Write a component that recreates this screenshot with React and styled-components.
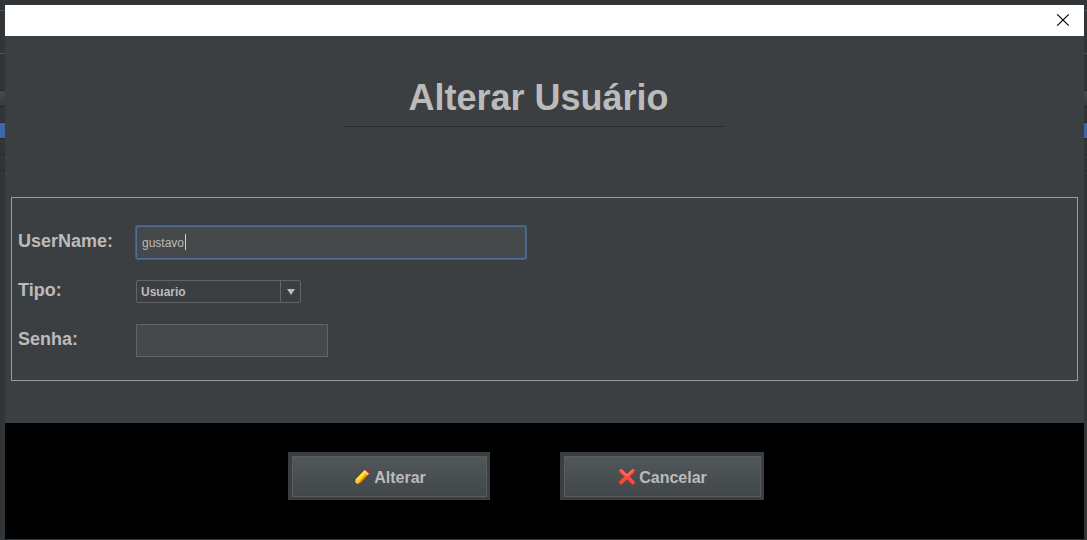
import React, { useState } from "react";
import styled, { createGlobalStyle } from "styled-components";

const GlobalStyle = createGlobalStyle`
  *, *::before, *::after { box-sizing: border-box; }
  body {
    margin: 0;
    background: #323537;
    color: #bbbbbb;
    font-family: "Liberation Sans", Arial, sans-serif;
  }
  button, input, select { font-family: inherit; color: inherit; }
`;

const Page = styled.div`
  display: grid;
  grid-template-columns: 5px minmax(0, 1fr) 3px;
  min-height: 100vh;
  padding: 5px 0 1px;
`;

const Edge = styled.div`
  display: flex;
  flex-direction: column;
`;

const Band = styled.div`
  height: ${(p) => p.$height}px;
  background: ${(p) => p.$fill || "transparent"};
  border-bottom: 1px solid ${(p) => p.$line || "#25282a"};
`;

const Dialog = styled.main`
  display: flex;
  flex-direction: column;
  background: #3c3f41;
`;

const TitleBar = styled.div`
  display: flex;
  justify-content: flex-end;
  align-items: center;
  height: 31px;
  padding: 0 14px 1px 0;
  background: #ffffff;
`;

const CloseButton = styled.button`
  display: flex;
  padding: 0;
  border: 0;
  background: none;
`;

const Header = styled.header`
  display: flex;
  justify-content: center;
  padding: 41px 22px 0 0;
`;

const Heading = styled.h1`
  width: 380px;
  margin: 0;
  padding: 0 0 7px 10px;
  border-bottom: 1px solid #2a2d2f;
  font-size: 36px;
  line-height: 42px;
  text-align: center;
`;

const Form = styled.form`
  display: flex;
  flex: 1;
  flex-direction: column;
`;

const Panel = styled.div`
  display: flex;
  flex-direction: column;
  gap: 21px;
  margin: 70px 6px 42px;
  padding: 28px 6px 23px;
  border: 1px solid #999c9d;
`;

const Row = styled.div`
  display: flex;
  align-items: center;
`;

const Label = styled.label`
  width: 118px;
  padding-bottom: 3px;
  font-size: 18px;
  font-weight: bold;
  line-height: 20px;
`;

const Field = styled.div`
  position: relative;
  display: flex;
  width: ${(p) => p.$width}px;
`;

const TextInput = styled.input`
  width: 100%;
  height: 33px;
  padding: 0 5px;
  border: 1px solid ${(p) => (p.$active ? "#4f7099" : "#646464")};
  border-radius: ${(p) => (p.$active ? 2 : 0)}px;
  outline: 0;
  box-shadow: ${(p) => (p.$active ? "0 0 0 1px #446084" : "none")};
  background: #45494a;
  font-size: 12px;
`;

const Caret = styled.span`
  position: absolute;
  top: 8px;
  left: 49px;
  width: 1px;
  height: 16px;
  background: #d0d0d0;
`;

const Select = styled.select`
  width: 100%;
  height: 23px;
  padding: 0 24px 0 4px;
  border: 1px solid #646464;
  border-radius: 2px;
  appearance: none;
  background: #3c3f41;
  font-size: 12px;
  font-weight: bold;
`;

const SelectArrow = styled.span`
  position: absolute;
  top: 1px;
  right: 1px;
  bottom: 1px;
  display: flex;
  align-items: center;
  justify-content: center;
  width: 20px;
  border-left: 1px solid #646464;
  pointer-events: none;
`;

const Footer = styled.footer`
  display: flex;
  flex: 1;
  justify-content: center;
  align-items: flex-start;
  gap: 70px;
  padding: 29px 37px 29px 0;
  background: #000000;
`;

const ActionButton = styled.button`
  display: flex;
  align-items: center;
  justify-content: center;
  gap: 3px;
  width: ${(p) => p.$width}px;
  height: 48px;
  padding: 2px 0 0;
  border: solid #3c3f41;
  border-width: 4px 3px 3px 4px;
  background: linear-gradient(#525759, #414648) padding-box;
  box-shadow: inset 0 0 0 1px #585d5f;
  font-size: 16px;
  font-weight: bold;

  svg { margin-top: -2px; }
`;

const PencilIcon = () => (
  <svg width="18" height="18" viewBox="0 0 18 18" aria-hidden="true">
    <path d="M2 16.5 2.6 11.6 6.8 14.8Z" fill="#f0d0a0" />
    <path d="M1.8 16.8 2.1 14.6 4 16Z" fill="#3a2418" />
    <path d="M2.6 11.6 10.8 3 15.2 6.8 7 15 4.4 15.6Z" fill="#f8bd00" />
    <path d="M2.6 11.6 10.8 3 13 4.8 4.8 13.4Z" fill="#ffe24a" />
    <path d="M5.8 15.2 14 6.4 15.2 7.2 7.2 15.2Z" fill="#b96a12" />
    <path d="M10.6 3.3 12 1.8 16.2 5.4 14.8 7Z" fill="#e6dcd6" />
    <path d="M12 1.9Q13.6 .4 15.5 1.4 17.6 3 16.7 4.8L15.9 5.7Z" fill="#b82a22" />
  </svg>
);

const CrossIcon = () => (
  <svg width="18" height="18" viewBox="0 0 18 18" aria-hidden="true">
    <path d="M3 3.2 15 14.8M15 3.2 3 14.8" stroke="#c92e29" strokeWidth="4" strokeLinecap="round" />
    <path d="M3 2.8 15 14.3M15 2.8 3 14.3" stroke="#f54a40" strokeWidth="3.8" strokeLinecap="round" />
    <path d="M3 2.2 8.9 7.6 14.8 2.2" stroke="#ff7a6e" strokeWidth="1.2" strokeLinecap="round" fill="none" />
  </svg>
);

const BackdropEdge = () => (
  <Edge aria-hidden="true">
    <Band $height={6} $line="#505456" />
    <Band $height={43} $line="#505456" />
    <Band $height={37} />
    <Band $height={16} $fill="linear-gradient(#4a4d4f, #36393b)" />
    <Band $height={16} />
    <Band $height={16} $fill="#4066a8" />
    <Band $height={16} />
    <Band $height={16} />
  </Edge>
);

export default function App() {
  const [userName, setUserName] = useState("gustavo");
  const [password, setPassword] = useState("");

  return (
    <>
      <GlobalStyle />
      <Page>
        <BackdropEdge />
        <Dialog>
          <TitleBar>
            <CloseButton type="button" aria-label="Fechar">
              <svg width="14" height="14" viewBox="0 0 14 14">
                <path d="M1.3 1.3 12.7 12.7M12.7 1.3 1.3 12.7" stroke="#000" strokeWidth="1.2" />
              </svg>
            </CloseButton>
          </TitleBar>
          <Header>
            <Heading>Alterar Usuário</Heading>
          </Header>
          <Form onSubmit={(e) => e.preventDefault()}>
            <Panel>
              <Row>
                <Label htmlFor="username">UserName:</Label>
                <Field $width={390}>
                  <TextInput
                    id="username"
                    $active
                    value={userName}
                    onChange={(e) => setUserName(e.target.value)}
                  />
                  <Caret />
                </Field>
              </Row>
              <Row>
                <Label htmlFor="tipo">Tipo:</Label>
                <Field $width={165}>
                  <Select id="tipo" defaultValue="Usuario">
                    <option>Usuario</option>
                  </Select>
                  <SelectArrow>
                    <svg width="8" height="6" viewBox="0 0 8 6" aria-hidden="true">
                      <path d="M0 0H8L4 6Z" fill="#bbbbbb" />
                    </svg>
                  </SelectArrow>
                </Field>
              </Row>
              <Row>
                <Label htmlFor="senha">Senha:</Label>
                <Field $width={192}>
                  <TextInput
                    id="senha"
                    type="password"
                    value={password}
                    onChange={(e) => setPassword(e.target.value)}
                  />
                </Field>
              </Row>
            </Panel>
            <Footer>
              <ActionButton type="submit" $width={202}>
                <PencilIcon />
                Alterar
              </ActionButton>
              <ActionButton type="button" $width={204}>
                <CrossIcon />
                Cancelar
              </ActionButton>
            </Footer>
          </Form>
        </Dialog>
        <BackdropEdge />
      </Page>
    </>
  );
}
